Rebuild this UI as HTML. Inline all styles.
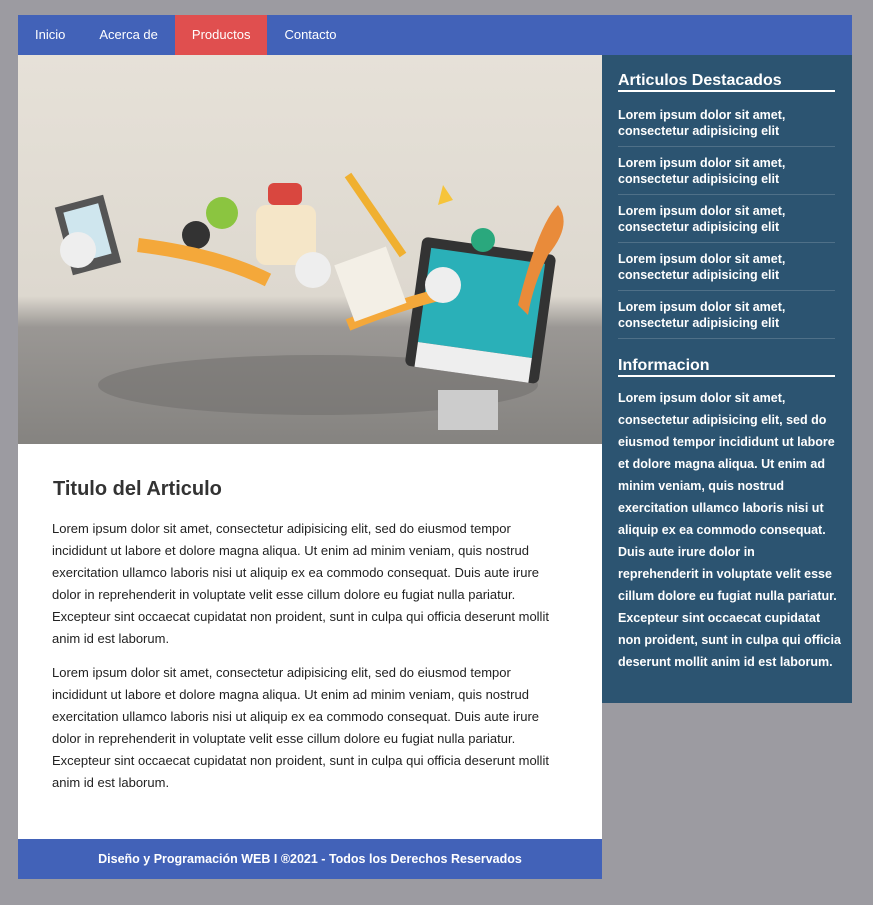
<!DOCTYPE html>
<html><head><meta charset="utf-8"><style>
*{margin:0;padding:0;box-sizing:border-box}
body{background:#9c9ba1;font-family:"Liberation Sans",Arial,sans-serif;width:873px;height:905px;position:relative;overflow:hidden}
nav{position:absolute;left:18px;top:15px;width:834px;height:40px;background:#4262b8}
nav a{float:left;height:40px;line-height:40px;padding:0 17px;color:#fff;font-size:13px;text-decoration:none}
nav a.act{background:#e04f4f}
.main{position:absolute;left:18px;top:55px;width:584px;height:784px;background:#fff}
.img{height:389px;position:relative;overflow:hidden;background:linear-gradient(#e6e1d8 0%,#ddd8cf 62%,#9a9794 70%,#858380 100%)}
.content{padding:34px 36px 0 34px;color:#222}
h1{font-size:20px;color:#333;margin-bottom:17px;padding-left:1px}
p{font-size:13px;line-height:22px;margin-bottom:12px}
footer{position:absolute;left:18px;top:839px;width:584px;height:40px;background:#4262b8;color:#fff;font-size:12.5px;font-weight:bold;text-align:center;line-height:40px}
aside{position:absolute;left:602px;top:55px;width:250px;height:648px;background:#2c5471;color:#fff;padding:17px 12px 0 16px}
aside h2{font-size:16px;border-bottom:2px solid #fff;padding-bottom:0;margin-bottom:15px;margin-right:5px}
aside ul{list-style:none;margin-bottom:18px;margin-right:5px}
aside li{font-size:12.5px;font-weight:bold;line-height:16px;padding-bottom:7px;margin-bottom:8px;border-bottom:1px solid #4f7088}
aside li:last-child{margin-bottom:0}
aside .info{font-size:12.5px;font-weight:bold;line-height:22px;margin-top:-5px;white-space:nowrap}
</style></head><body>
<nav><a>Inicio</a><a>Acerca de</a><a class="act">Productos</a><a>Contacto</a></nav>
<div class="main">
<div class="img">
<svg width="584" height="389" style="position:absolute;left:0;top:0">
<ellipse cx="300" cy="330" rx="220" ry="30" fill="#6d6b69" opacity=".5"/>
<rect x="45" y="145" width="50" height="70" fill="#555" transform="rotate(-15 70 180)"/>
<rect x="52" y="152" width="36" height="52" fill="#cfe6ee" transform="rotate(-15 70 180)"/>
<circle cx="204" cy="158" r="16" fill="#8bc540"/>
<circle cx="178" cy="180" r="14" fill="#333"/>
<rect x="238" y="150" width="60" height="60" rx="10" fill="#f5e6c8"/>
<rect x="250" y="128" width="34" height="22" rx="6" fill="#d9473f"/>
<rect x="395" y="190" width="135" height="130" rx="6" fill="#333" transform="rotate(8 460 255)"/>
<rect x="405" y="200" width="115" height="95" fill="#2ab0b8" transform="rotate(8 460 255)"/>
<rect x="405" y="295" width="115" height="25" fill="#eee" transform="rotate(8 460 255)"/>
<rect x="420" y="335" width="60" height="40" fill="#ccc"/>
<path d="M500 250 Q520 170 540 150 Q555 170 530 200 Q515 230 510 260Z" fill="#e98b3a"/>
<circle cx="465" cy="185" r="12" fill="#2aa87d"/>
<path d="M120 190 Q200 200 250 225" stroke="#f4a83a" stroke-width="14" fill="none"/>
<path d="M330 270 Q380 250 420 240" stroke="#f4a83a" stroke-width="12" fill="none"/>
<circle cx="295" cy="215" r="18" fill="#eee"/><circle cx="425" cy="230" r="18" fill="#eee"/>
<circle cx="60" cy="195" r="18" fill="#eee"/>
<rect x="325" y="200" width="55" height="60" fill="#f3efe6" transform="rotate(-20 350 230)"/>
<polygon points="425,130 435,145 420,150" fill="#f6c43a"/>
<path d="M330 120 L385 200" stroke="#f0b030" stroke-width="8"/>
</svg>
</div>
<div class="content">
<h1>Titulo del Articulo</h1>
<p>Lorem ipsum dolor sit amet, consectetur adipisicing elit, sed do eiusmod tempor incididunt ut labore et dolore magna aliqua. Ut enim ad minim veniam, quis nostrud exercitation ullamco laboris nisi ut aliquip ex ea commodo consequat. Duis aute irure dolor in reprehenderit in voluptate velit esse cillum dolore eu fugiat nulla pariatur. Excepteur sint occaecat cupidatat non proident, sunt in culpa qui officia deserunt mollit anim id est laborum.</p>
<p>Lorem ipsum dolor sit amet, consectetur adipisicing elit, sed do eiusmod tempor incididunt ut labore et dolore magna aliqua. Ut enim ad minim veniam, quis nostrud exercitation ullamco laboris nisi ut aliquip ex ea commodo consequat. Duis aute irure dolor in reprehenderit in voluptate velit esse cillum dolore eu fugiat nulla pariatur. Excepteur sint occaecat cupidatat non proident, sunt in culpa qui officia deserunt mollit anim id est laborum.</p>
</div>
</div>
<footer>Diseño y Programación WEB I ®2021 - Todos los Derechos Reservados</footer>
<aside>
<h2>Articulos Destacados</h2>
<ul>
<li>Lorem ipsum dolor sit amet, consectetur adipisicing elit</li>
<li>Lorem ipsum dolor sit amet, consectetur adipisicing elit</li>
<li>Lorem ipsum dolor sit amet, consectetur adipisicing elit</li>
<li>Lorem ipsum dolor sit amet, consectetur adipisicing elit</li>
<li>Lorem ipsum dolor sit amet, consectetur adipisicing elit</li>
</ul>
<h2>Informacion</h2>
<div class="info">Lorem ipsum dolor sit amet,<br>consectetur adipisicing elit, sed do<br>eiusmod tempor incididunt ut labore<br>et dolore magna aliqua. Ut enim ad<br>minim veniam, quis nostrud<br>exercitation ullamco laboris nisi ut<br>aliquip ex ea commodo consequat.<br>Duis aute irure dolor in<br>reprehenderit in voluptate velit esse<br>cillum dolore eu fugiat nulla pariatur.<br>Excepteur sint occaecat cupidatat<br>non proident, sunt in culpa qui officia<br>deserunt mollit anim id est laborum.</div>
</aside>
</body></html>
